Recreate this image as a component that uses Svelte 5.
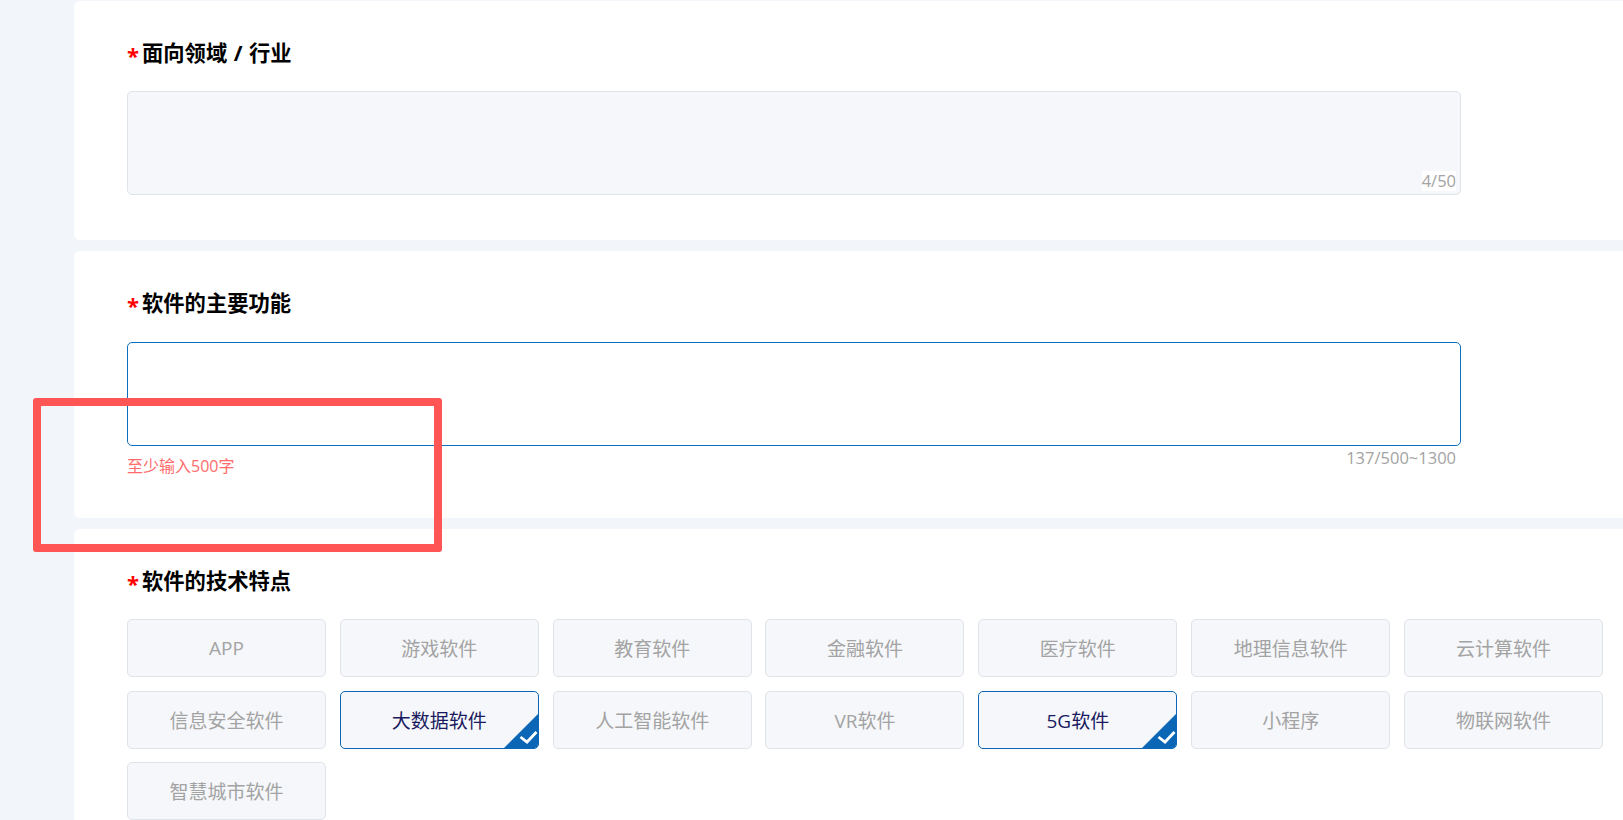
<script>
  const tags = [
    { name: 'APP' },
    { name: '游戏软件' },
    { name: '教育软件' },
    { name: '金融软件' },
    { name: '医疗软件' },
    { name: '地理信息软件' },
    { name: '云计算软件' },
    { name: '信息安全软件' },
    { name: '大数据软件', on: true },
    { name: '人工智能软件' },
    { name: 'VR软件' },
    { name: '5G软件', on: true },
    { name: '小程序' },
    { name: '物联网软件' },
    { name: '智慧城市软件' }
  ];
</script>

<div class="page">
  <section class="card first">
    <h3 class="title"><span class="req">*</span>面向领域 / 行业</h3>
    <div class="field filled">
      <span class="count boxed">4/50</span>
    </div>
  </section>

  <section class="card second">
    <h3 class="title"><span class="req">*</span>软件的主要功能</h3>
    <div class="field active"></div>
    <div class="below">
      <span class="error">至少输入500字</span>
      <span class="count">137/500~1300</span>
    </div>
  </section>

  <section class="card third">
    <h3 class="title"><span class="req">*</span>软件的技术特点</h3>
    <div class="tags">
      {#each tags as tag}
        <div class="tag" class:on={tag.on}>
          {tag.name}
          {#if tag.on}
            <svg class="tick" width="34" height="34" viewBox="0 0 34 34">
              <path d="M34 0V34H0Z" fill="#0b66b5" />
              <path d="M16.5 23l6.5 5 9.5-10" fill="none" stroke="#fff" stroke-width="2.8" />
            </svg>
          {/if}
        </div>
      {/each}
    </div>
  </section>

  <div class="mark"></div>
</div>

<style>
  :global(body) {
    margin: 0;
    background: #f2f5f9;
  }

  .page {
    position: relative;
    height: 820px;
    overflow: hidden;
    padding: 1px 0 0 74px;
    box-sizing: border-box;
    font-family: "Open Sans", "Noto Sans CJK SC", sans-serif;
  }

  .card {
    background: #fff;
    border-radius: 6px 0 0 6px;
    padding: 37px 0 0 53px;
    margin-bottom: 11px;
    box-sizing: border-box;
  }

  .first { height: 239px; }
  .second { height: 267px; }
  .third { height: 300px; border-radius: 6px 0 0 0; }

  .title {
    margin: 0 0 23px;
    height: 30px;
    line-height: 30px;
    font-size: 21.3px;
    font-weight: 700;
    word-spacing: 1px;
    color: #000;
    display: flex;
    align-items: center;
  }

  .second .title {
    margin-bottom: 24px;
  }

  .req {
    color: #f00;
    font-size: 22px;
    width: 15px;
    flex: none;
    padding-top: 3px;
  }

  .field {
    width: 1334px;
    height: 104px;
    box-sizing: border-box;
    border-radius: 5px;
    position: relative;
  }

  .filled {
    background: #f5f7fa;
    border: 1px solid #dfe4ea;
  }

  .active {
    background: #fff;
    border: 1px solid #0b6fbd;
  }

  .count {
    font-size: 16.5px;
    line-height: 20px;
    color: #a3a3a3;
  }

  .boxed {
    position: absolute;
    right: 4px;
    bottom: 3px;
    background: #fff;
  }

  .below {
    width: 1329px;
    display: flex;
    justify-content: space-between;
    margin-top: 2px;
  }

  .error {
    font-size: 16px;
    line-height: 20px;
    color: #ff6b6b;
    margin-top: 8px;
  }

  .tags {
    width: 1476px;
    display: grid;
    grid-template-columns: repeat(7, 199px);
    gap: 13.5px 13.83px;
  }

  .tag {
    position: relative;
    height: 58px;
    box-sizing: border-box;
    overflow: hidden;
    border: 1px solid #dfe4ea;
    border-radius: 5px;
    background: #f5f7fa;
    color: #a3a3a3;
    font-size: 19px;
    display: flex;
    align-items: center;
    justify-content: center;
  }

  .tag.on {
    border-color: #0b66b5;
    color: #1a1a5e;
  }

  .tick {
    position: absolute;
    right: 0;
    bottom: 0;
  }

  .mark {
    position: absolute;
    left: 33px;
    top: 398px;
    width: 409px;
    height: 154px;
    box-sizing: border-box;
    border: 8px solid #ff5555;
    border-radius: 3px;
  }
</style>
